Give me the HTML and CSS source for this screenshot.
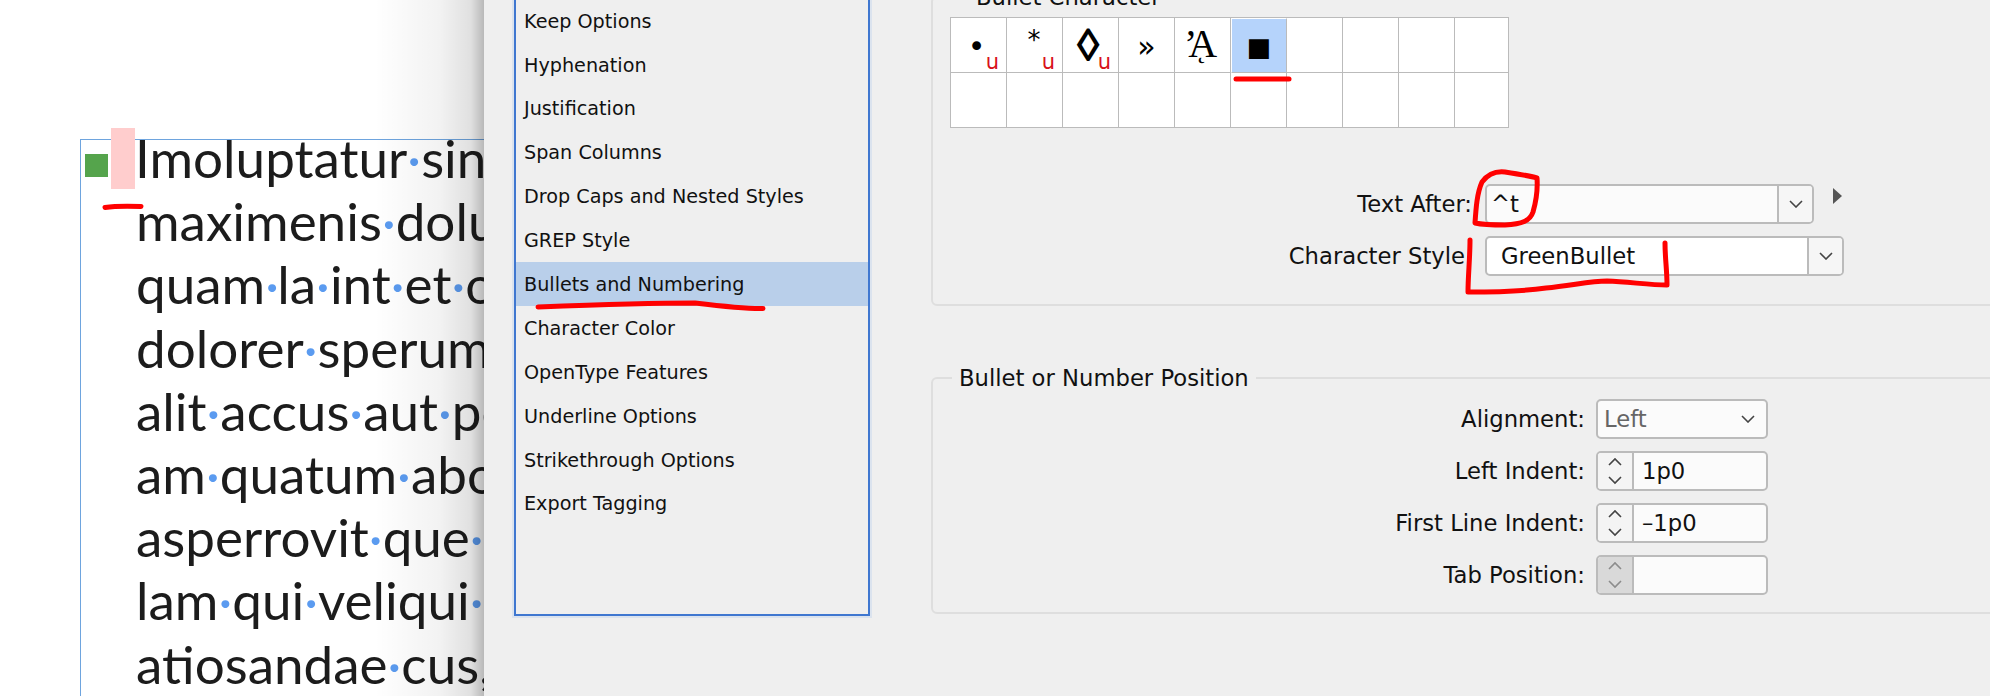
FILE: index.html
```html
<!DOCTYPE html>
<html lang="en">
<head>
  <meta charset="UTF-8" />
  <title>Bullets and Numbering</title>
  <link rel="stylesheet" href="styles.css">
</head>
<body>
  <div class="screen">
    <div class="doc">
      <div class="frame">
        <div class="line first">
          <span class="bullet"></span>
          <span class="tab-mark"></span>
          <span>Imoluptatur<i>·</i>sinus</span>
        </div>
        <div class="line">maximenis<i>·</i>dolupt</div>
        <div class="line">quam<i>·</i>la<i>·</i>int<i>·</i>et<i>·</i>os</div>
        <div class="line">dolorer<i>·</i>sperum</div>
        <div class="line">alit<i>·</i>accus<i>·</i>aut<i>·</i>pos</div>
        <div class="line">am<i>·</i>quatum<i>·</i>abor</div>
        <div class="line">asperrovit<i>·</i>que<i>·</i></div>
        <div class="line">lam<i>·</i>qui<i>·</i>veliqui<i>·</i></div>
        <div class="line">atiosandae<i>·</i>cus,</div>
      </div>
    </div>

    <div class="dialog">
      <ul class="categories">
        <li>Keep Options</li>
        <li>Hyphenation</li>
        <li>Justification</li>
        <li>Span Columns</li>
        <li>Drop Caps and Nested Styles</li>
        <li>GREP Style</li>
        <li class="selected">Bullets and Numbering</li>
        <li>Character Color</li>
        <li>OpenType Features</li>
        <li>Underline Options</li>
        <li>Strikethrough Options</li>
        <li>Export Tagging</li>
      </ul>

      <div class="panels">
        <fieldset class="group bullet-group">
          <legend>Bullet Character</legend>
          <div class="glyphs">
            <div class="cell"><span class="g-dot">•</span><span class="u">u</span></div>
            <div class="cell"><span class="g-star">*</span><span class="u">u</span></div>
            <div class="cell"><span class="g-loz">◊</span><span class="u">u</span></div>
            <div class="cell"><span class="g-quote">»</span></div>
            <div class="cell"><span class="g-a"><span class="g-apos">’</span>A<span class="g-tail">˛</span></span></div>
            <div class="cell active"><span class="g-square">■</span></div>
            <div class="cell"></div><div class="cell"></div><div class="cell"></div><div class="cell"></div>
            <div class="cell"></div><div class="cell"></div><div class="cell"></div><div class="cell"></div><div class="cell"></div>
            <div class="cell"></div><div class="cell"></div><div class="cell"></div><div class="cell"></div><div class="cell"></div>
          </div>

          <div class="row text-after">
            <label>Text After:</label>
            <div class="field combo">
              <span class="value">^t</span>
              <span class="drop"><svg width="14" height="8" viewBox="0 0 14 8"><path d="M1 1l6 6 6-6" /></svg></span>
            </div>
            <span class="flyout"></span>
          </div>
          <div class="row char-style">
            <label>Character Style</label>
            <div class="field combo">
              <span class="value">GreenBullet</span>
              <span class="drop"><svg width="14" height="8" viewBox="0 0 14 8"><path d="M1 1l6 6 6-6" /></svg></span>
            </div>
          </div>
        </fieldset>

        <fieldset class="group position-group">
          <legend>Bullet or Number Position</legend>
          <div class="row">
            <label>Alignment:</label>
            <div class="field select">
              <span class="value muted">Left</span>
              <svg width="14" height="8" viewBox="0 0 14 8"><path d="M1 1l6 6 6-6" /></svg>
            </div>
          </div>
          <div class="row">
            <label>Left Indent:</label>
            <div class="field">
              <span class="stepper"><svg width="14" height="28" viewBox="0 0 14 28"><path d="M1 8l6-6 6 6M1 20l6 6 6-6" /></svg></span>
              <span class="value">1p0</span>
            </div>
          </div>
          <div class="row">
            <label>First Line Indent:</label>
            <div class="field">
              <span class="stepper"><svg width="14" height="28" viewBox="0 0 14 28"><path d="M1 8l6-6 6 6M1 20l6 6 6-6" /></svg></span>
              <span class="value">–1p0</span>
            </div>
          </div>
          <div class="row">
            <label>Tab Position:</label>
            <div class="field">
              <span class="stepper off"><svg width="14" height="28" viewBox="0 0 14 28"><path d="M1 8l6-6 6 6M1 20l6 6 6-6" /></svg></span>
              <span class="value"></span>
            </div>
          </div>
        </fieldset>
      </div>
    </div>

    <!-- red pen marks drawn on top of the screenshot -->
    <svg class="marks" width="1990" height="696" viewBox="0 0 1990 696">
      <path d="M105 207.500C115 206 128 206 141 206.500" />
      <path d="M538 307C590 305 650 303 695 303C720 306 745 309 763 308.500" />
      <path d="M1236 79L1289 79" />
      <path d="M1482 182C1488 174 1496 171 1505 172C1518 174 1530 176 1537 178C1538 192 1535 205 1533 212C1530 221 1522 224 1505 225C1495 225 1484 225 1475 223C1476 208 1477 193 1482 182Z" />
      <path d="M1470 240C1470 258 1468 276 1468 292C1495 292 1525 291 1546 288C1570 286 1590 281 1607 281C1630 282 1650 285 1667 285C1667 270 1665 258 1665 243" />
    </svg>
  </div>
</body>
</html>
```

FILE: styles.css
```css
* {
  box-sizing: border-box;
}
body {
  margin: 0;
  background: #efefef;
  color: #111;
  font-family: 'DejaVu Sans', sans-serif;
  font-size: 22.7px;
}
.screen {
  position: relative;
  display: flex;
  width: 1990px;
  height: 696px;
  overflow: hidden;
}

/* document behind the dialog */
.doc {
  position: relative;
  flex: 0 0 484px;
  background: #fff;
  padding: 139px 0 0 80px;
  overflow: hidden;
}
.doc::after {
  content: "";
  position: absolute;
  top: 0;
  right: 0;
  bottom: 0;
  width: 110px;
  background: linear-gradient(to right, rgba(0,0,0,0) 0%, rgba(0,0,0,0.05) 60%, rgba(0,0,0,0.12) 88%, rgba(0,0,0,0.28) 100%);
}
.frame {
  width: 600px;
  height: 600px;
  border-top: 1px solid #6ea4de;
  border-left: 1px solid #6ea4de;
  padding-left: 4px;
}
.line {
  height: 63.2px;
  margin-left: 51px;
  font-family: 'Lato', sans-serif;
  font-size: 53px;
  line-height: 36px;
  color: #1c1c1c;
  white-space: nowrap;
}
.line i {
  font-style: normal;
  color: #5b9bf0;
}
.line.first {
  display: flex;
  margin-left: 0;
}
.bullet {
  flex: none;
  width: 23px;
  height: 23px;
  margin: 14px 3px 0 0;
  background: #55a44c;
}
.tab-mark {
  flex: none;
  width: 24px;
  height: 61px;
  margin: -12px 0 0 0;
  background: #ffcdcd;
}

/* dialog */
.dialog {
  flex: 1;
  display: flex;
  align-items: flex-start;
  min-width: 0;
}
.categories {
  flex: none;
  width: 356px;
  height: 619px;
  margin: -3.4px 0 0 30px;
  padding: 0;
  list-style: none;
  font-size: 19.2px;
  border: 2px solid #3f77d0;
  box-shadow: 0 0 0 2px #dbe3ee;
}
.categories li {
  height: 43.9px;
  padding-left: 8px;
  line-height: 46px;
}
.categories .selected {
  background: #b9cfea;
}
.panels {
  flex: 1;
  min-width: 0;
  margin: -15px -20px 0 61px;
}
.group {
  margin: 0;
  padding: 8px 0 0;
  border: 2px solid #dedede;
  border-radius: 6px;
  min-width: 0;
}
.group legend {
  margin-left: 19px;
  padding: 0 7px;
  height: 24px;
  line-height: 24px;
}
.bullet-group {
  padding-left: 17px;
  padding-bottom: 28px;
}
.position-group {
  margin-top: 60px;
  padding-top: 9px;
  padding-bottom: 17px;
}

/* glyph table */
.glyphs {
  display: grid;
  grid-template-columns: repeat(9, 56px) 54px;
  grid-template-rows: 55px 55px;
  width: 559px;
  margin-bottom: 56px;
  background: #fff;
  border-top: 1px solid #bbb;
  border-left: 1px solid #bbb;
}
.cell {
  position: relative;
  display: flex;
  align-items: center;
  justify-content: center;
  border-right: 1px solid #bbb;
  border-bottom: 1px solid #bbb;
  color: #000;
  overflow: hidden;
}
.cell.active {
  background: #b5d3fb;
  border-left: 1px solid #fff;
  border-top: 1px solid #fff;
}
.u {
  position: absolute;
  right: 7px;
  bottom: -2px;
  color: #d8121a;
  font-size: 21px;
  line-height: 24px;
}
.g-dot {
  margin: 2px 4px 0 0;
  font-size: 30px;
}
.g-star {
  margin: -10px 1px 0 0;
  font-size: 26px;
}
.g-loz {
  margin: 0 5px 0 0;
  font-family: 'Liberation Sans', sans-serif;
  font-size: 46px;
  font-weight: bold;
}
.g-quote {
  font-size: 30px;
  margin-top: 2px;
}
.g-a {
  position: relative;
  margin-top: -3px;
  font-family: 'Liberation Serif', serif;
  font-size: 40px;
  line-height: 1;
}
.g-apos {
  letter-spacing: -9px;
  margin-left: -4px;
}
.g-tail {
  position: absolute;
  left: 9px;
  top: 11px;
  font-size: 28px;
}
.g-square {
  font-size: 26px;
  line-height: 1;
  margin-top: 2px;
}

/* form rows */
.row {
  display: flex;
  align-items: center;
  height: 40px;
  margin-bottom: 12px;
}
.row:last-child {
  margin-bottom: 0;
}
.row label {
  flex: none;
  width: 652px;
  margin-right: 11px;
  text-align: right;
}
.bullet-group .row {
  margin-left: -17px;
}
.text-after label {
  width: 539px;
  margin-right: 13px;
}
.char-style label {
  width: 532px;
  margin-right: 20px;
}
.field {
  flex: none;
  display: flex;
  align-items: center;
  width: 172px;
  height: 40px;
  background: #fbfbfb;
  border: 2px solid #bbb;
  border-radius: 5px;
  overflow: hidden;
}
.field svg path {
  fill: none;
  stroke: #444;
  stroke-width: 1.6;
}
.field .value {
  flex: 1;
  padding-left: 8px;
}
.text-after .field {
  width: 329px;
}
.text-after .value {
  padding-left: 4px;
}
.char-style .field {
  width: 359px;
  background: #fff;
}
.char-style .value {
  padding-left: 14px;
}
.combo .drop {
  flex: none;
  display: flex;
  align-items: center;
  justify-content: center;
  width: 35px;
  height: 100%;
  border-left: 2px solid #bbb;
  background: #f6f6f6;
}
.select {
  padding-right: 11px;
}
.select .value {
  padding-left: 6px;
}
.muted {
  color: #666;
}
.stepper {
  flex: none;
  display: flex;
  align-items: center;
  justify-content: center;
  width: 36px;
  height: 100%;
  border-right: 2px solid #bbb;
  background: #f4f4f4;
}
.stepper.off {
  background: #d9d9d9;
}
.field .stepper.off svg path {
  stroke: #8c8c8c;
}
.flyout {
  flex: none;
  width: 0;
  height: 0;
  align-self: flex-start;
  margin: 4px 0 0 19px;
  border-left: 9px solid #555;
  border-top: 8px solid transparent;
  border-bottom: 8px solid transparent;
}

/* annotations */
.marks {
  position: absolute;
  top: 0;
  left: 0;
  pointer-events: none;
}
.marks path {
  fill: none;
  stroke: #f00;
  stroke-width: 5;
  stroke-linecap: round;
  stroke-linejoin: round;
}
```
